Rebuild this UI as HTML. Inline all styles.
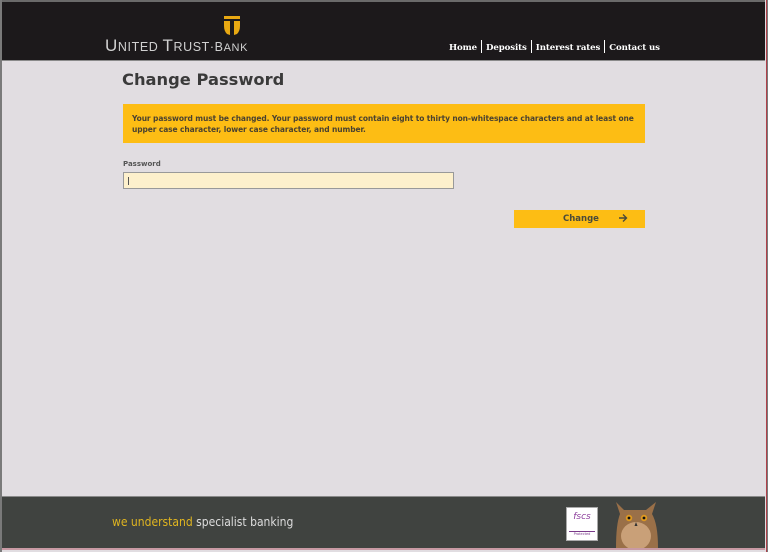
<!DOCTYPE html>
<html><head><meta charset="utf-8"><style>
*{margin:0;padding:0;box-sizing:border-box}
html,body{width:768px;height:552px;overflow:hidden;background:#3a3a3a}
body{font-family:"DejaVu Sans","Liberation Sans",sans-serif;position:relative}
.frame{position:absolute;left:0;top:0;width:768px;height:552px;background:#e1dde1;border-left:2px solid #7a7a7a;border-right:2px solid #7a7a7a}
.redr{position:absolute;right:1px;top:0;width:1px;height:552px;background:#b0404a}
.hdr{position:absolute;left:2px;top:0;width:763px;height:61px;background:#1c191b;border-top:2px solid #6a6a6a;border-bottom:1px solid #8a8a8a}
.logo{position:absolute;left:103px;top:34px;color:#d0d0d0;font-family:"Liberation Sans",sans-serif;font-size:12.5px;letter-spacing:0.6px;white-space:nowrap}
.logo .b{font-size:17px}
.nav{position:absolute;left:447px;top:38px;color:#fff;font-family:"DejaVu Serif","Liberation Serif",serif;font-weight:bold;font-size:8.6px;white-space:nowrap;letter-spacing:-0.1px}
.nav span.s{display:inline-block;width:1px;height:13px;background:#fff;vertical-align:-3px;margin:0 4px}
h1{position:absolute;left:122px;top:70px;font-size:16.3px;font-weight:bold;color:#3a3a3a}
.msg{position:absolute;left:123px;top:104px;width:522px;height:39px;background:#fdbd14;color:#4a4230;font-size:7.5px;font-weight:bold;padding:9px 9px;line-height:11px;letter-spacing:-0.1px}
.lbl{position:absolute;left:123px;top:160px;font-size:7px;font-weight:bold;color:#555}
.inp{position:absolute;left:123px;top:172px;width:331px;height:17px;background:#fdf0cc;border:1px solid #999}
.inp i{position:absolute;left:4px;top:4px;width:1px;height:8px;background:#555}
.btn{position:absolute;left:514px;top:210px;width:131px;height:18px;background:#fdbd14;color:#4a4a3a;font-size:8.5px;font-weight:bold}
.btn .t{position:absolute;left:49px;top:4px}
.btn .a{position:absolute;left:104px;top:3px}
.ftr{position:absolute;left:2px;top:496px;width:763px;height:53px;background:#404340;border-top:1px solid #8a8a8a}
.pink{position:absolute;left:2px;top:548px;width:763px;height:2px;background:#c99aa4}
.tag{position:absolute;left:112px;top:515px;font-family:"DejaVu Sans Condensed","Liberation Sans Narrow",sans-serif;font-size:12px;color:#ddd;white-space:nowrap}
.tag b{font-weight:normal;color:#e0b520}
.fscs{position:absolute;left:566px;top:507px;width:32px;height:34px;background:#fff;border:1px solid #aaa}
.fscs .l{position:absolute;left:0;top:4px;width:30px;text-align:center;font-size:9px;color:#8a3a9a;font-style:italic}
.fscs .p{position:absolute;left:2px;bottom:2px;width:26px;height:7px;border-top:1px solid #7a3a8a;font-size:3.5px;color:#7a3a8a;text-align:center}
</style></head><body>
<div class="frame"></div>
<div class="redr"></div>
<div class="hdr">
 <svg style="position:absolute;left:220px;top:14px" width="20" height="24" viewBox="0 0 20 24"><rect x="2" y="0" width="16" height="3" fill="#e8a812"/><path d="M2 5h6v14l-3-1q-3-3-3-8z M12 5h6v5q0 5-3 8l-3 1z" fill="#e8a812"/></svg>
 <div class="logo"><span class="b">U</span>NITED <span class="b">T</span>RUST·<span style="font-size:12.5px">B</span><span style="font-size:11px">ANK</span></div>
 <div class="nav">Home<span class="s"></span>Deposits<span class="s"></span>Interest rates<span class="s"></span>Contact us</div>
</div>
<h1>Change Password</h1>
<div class="msg">Your password must be changed. Your password must contain eight to thirty non-whitespace characters and at least one<br>upper case character, lower case character, and number.</div>
<div class="lbl">Password</div>
<div class="inp"><i></i></div>
<div class="btn"><span class="t">Change</span><svg class="a" width="10" height="10" viewBox="0 0 10 10"><path d="M1 5h7M5 1.5l3.5 3.5L5 8.5" stroke="#4a4a3a" stroke-width="1.4" fill="none"/></svg></div>
<div class="ftr"></div>
<div class="pink"></div>
<div class="tag"><b>we understand</b> specialist banking</div>
<div class="fscs"><div class="l">fscs</div><div class="p">Protected</div></div>
<svg style="position:absolute;left:612px;top:500px" width="48" height="48" viewBox="0 0 48 48"><path d="M4 2l8 8h22l10-8-4 12q6 10 6 34H4q0-24 4-34z" fill="#9a7048"/><ellipse cx="24" cy="36" rx="15" ry="14" fill="#c9a078"/><circle cx="17" cy="18" r="3.2" fill="#e09a20"/><circle cx="32" cy="18" r="3.2" fill="#e09a20"/><circle cx="17" cy="18" r="1.4" fill="#111"/><circle cx="32" cy="18" r="1.4" fill="#111"/><path d="M24 22l-1.5 4h3z" fill="#333"/></svg>
</body></html>
